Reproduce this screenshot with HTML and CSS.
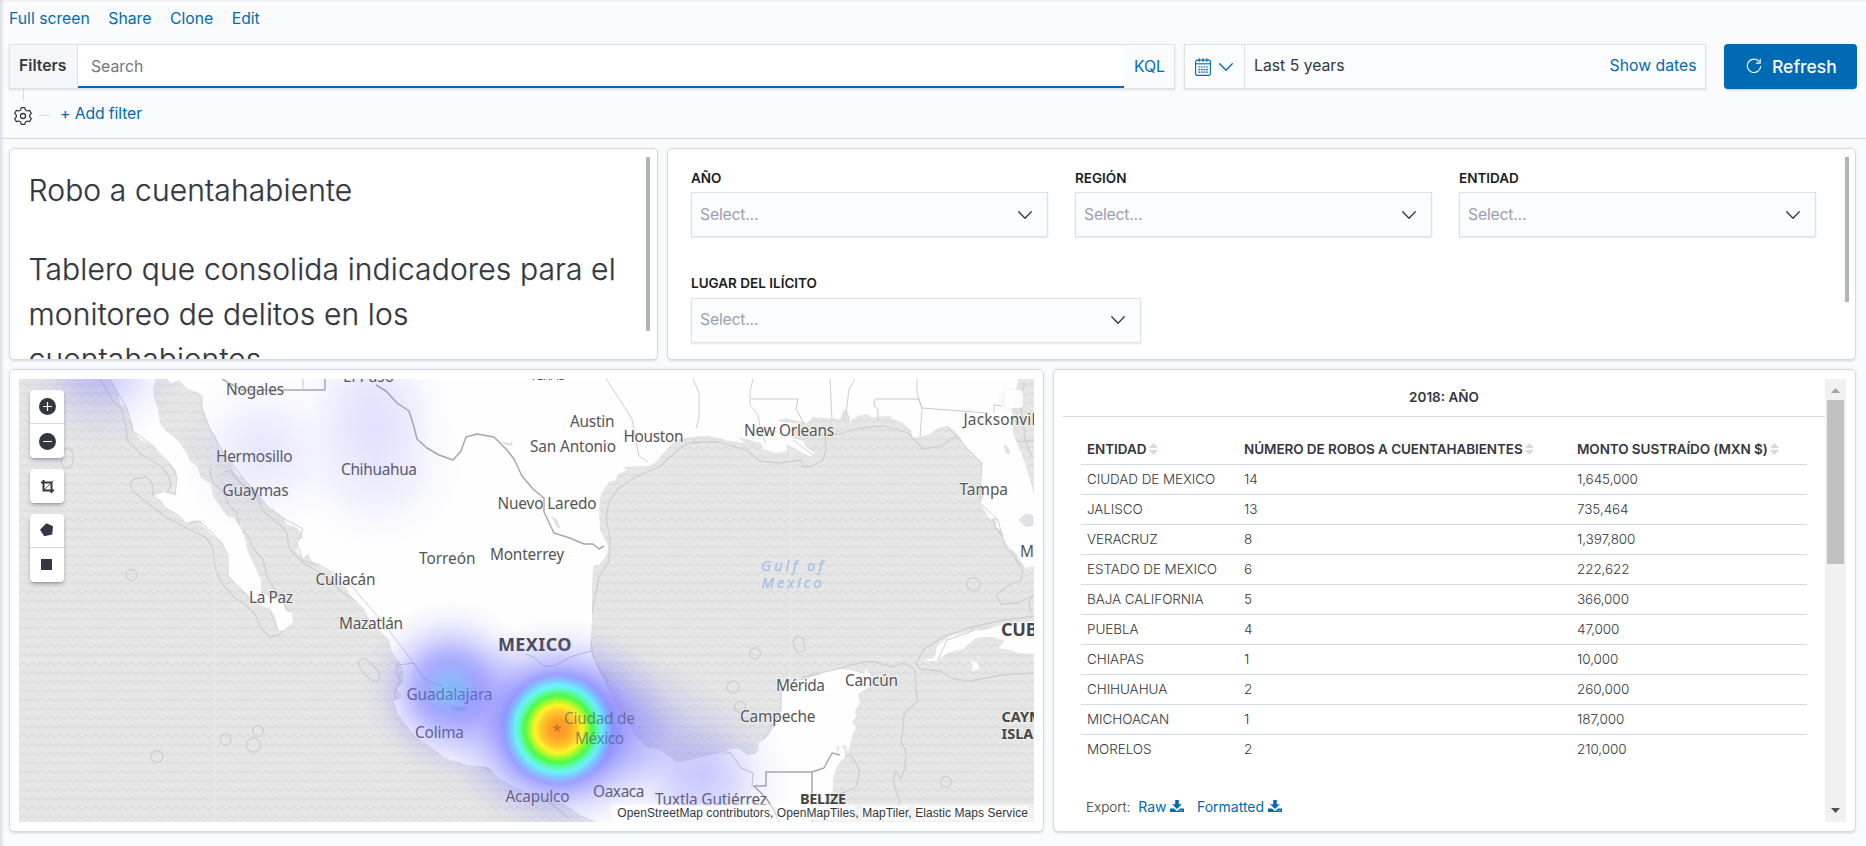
FILE: index.html
```html
<!DOCTYPE html>
<html lang="es">
<head>
<meta charset="utf-8">
<title>Robo a cuentahabiente</title>
<link rel="stylesheet" href="styles.css">
</head>
<body>
<svg class="defs" aria-hidden="true">
  <symbol id="chevron" viewBox="0 0 16 16"><path d="M1.7 4.8 8 11.2l6.3-6.4" fill="none" stroke="currentColor" stroke-width="1.3" stroke-linecap="round" stroke-linejoin="round"/></symbol>
  <symbol id="sort" viewBox="0 0 9 12"><path d="M0 5 4.5 0 9 5zM0 7h9l-4.5 5z" fill="currentColor"/></symbol>
  <symbol id="download" viewBox="0 0 14 13"><path d="M5.2 0h3.6v4.3h3L7 9 2.2 4.3h3zM0 8.6h4l3 2.6 3-2.6h4V12H0z" fill="currentColor"/><path d="M9.5 10.7h1M11.5 10.7h1" stroke="#fff" stroke-width=".8"/></symbol>
</svg>
<div class="app">
  <nav class="menu"><a>Full screen</a><a>Share</a><a>Clone</a><a>Edit</a></nav>

  <div class="query-bar">
    <div class="search-group">
      <div class="filters-label">Filters</div>
      <div class="search-input">Search</div>
      <div class="kql">KQL</div>
    </div>
    <div class="date-group">
      <div class="date-quick">
        <svg class="calendar" viewBox="0 0 16 18"><g fill="none" stroke="currentColor"><rect x=".6" y="2.1" width="14.8" height="15.3" rx="1.6" stroke-width="1.1"/><path d="M.6 5.8h14.8" stroke-width="1.1"/><path d="M4.2 0v4M8 0v4M11.8 0v4" stroke-width="1"/><path d="M3.3 9h9.6M3.3 11.6h9.6M3.3 14.2h9.6" stroke-width="1.2" stroke-dasharray="1.8 .8"/></g></svg>
        <svg class="chevron"><use href="#chevron"/></svg>
      </div>
      <div class="date-range"><span>Last 5 years</span><a>Show dates</a></div>
    </div>
    <button class="refresh">
      <svg viewBox="0 0 16 16"><path d="M13.3 3.7A6.7 6.7 0 1 0 14.7 8M14.2.7v4.4H9.9" fill="none" stroke="currentColor" stroke-width="1.1"/></svg>
      <span>Refresh</span>
    </button>
  </div>

  <div class="filter-row">
    <div class="branch"></div>
    <svg class="gear" viewBox="-9 -9 18 18"><path d="M-1.7-8.3h3.4l.7 2.2 1.9 1.1 2.3-.6 1.7 2.9-1.6 1.7v2l1.6 1.7-1.7 2.9-2.3-.6-1.9 1.1-.7 2.2h-3.4l-.7-2.2L-4.300 5l-2.300.6-1.700-2.900L-6.700 1v-2l-1.600-1.700 1.700-2.900 2.300.6 1.900-1.100z" fill="none" stroke="currentColor" stroke-width="1.200" stroke-linejoin="round"/><circle r="2.500" fill="none" stroke="currentColor" stroke-width="1.300"/></svg>
    <span class="dash"></span>
    <a>+ Add filter</a>
  </div>

  <main class="grid">
    <div class="grid-row top">
      <section class="panel intro">
        <div class="intro-text"><h1>Robo a cuentahabiente</h1><h1>Tablero que consolida indicadores para el monitoreo de delitos en los cuentahabientes</h1></div>
        <div class="thin-scroll"></div>
      </section>
      <section class="panel controls">
        <div class="fields">
          <div class="field"><label>AÑO</label><div class="select"><span>Select...</span><svg class="chevron"><use href="#chevron"/></svg></div></div>
          <div class="field"><label>REGIÓN</label><div class="select"><span>Select...</span><svg class="chevron"><use href="#chevron"/></svg></div></div>
          <div class="field"><label>ENTIDAD</label><div class="select"><span>Select...</span><svg class="chevron"><use href="#chevron"/></svg></div></div>
          <div class="field wide"><label>LUGAR DEL ILÍCITO</label><div class="select"><span>Select...</span><svg class="chevron"><use href="#chevron"/></svg></div></div>
        </div>
        <div class="thin-scroll short"></div>
      </section>
    </div>

    <div class="grid-row bottom">
      <section class="panel map-panel">
        <div class="map">
          <svg class="map-canvas" viewBox="19 379 1015 443">
            <defs>
              <pattern id="waves" width="9" height="9" patternUnits="userSpaceOnUse" x="19" y="379"><path d="M0 7q1.500 0 2.500-1.200T4.500 4.800 6.500 5.800 9 7" fill="none" stroke="#dbdbdb" stroke-width="1.300"/></pattern>
              <radialGradient id="hot"><stop offset="0" stop-color="#ff9420" stop-opacity=".95"/><stop offset=".08" stop-color="#ff9d1c" stop-opacity=".95"/><stop offset=".16" stop-color="#ffc820" stop-opacity=".95"/><stop offset=".21" stop-color="#fff51e" stop-opacity=".95"/><stop offset=".25" stop-color="#b0f820" stop-opacity=".95"/><stop offset=".3" stop-color="#3ffb38" stop-opacity=".92"/><stop offset=".35" stop-color="#4cfcb0" stop-opacity=".88"/><stop offset=".39" stop-color="#50f0ff" stop-opacity=".82"/><stop offset=".44" stop-color="#5cb0ff" stop-opacity=".74"/><stop offset=".49" stop-color="#6b70ff" stop-opacity=".64"/><stop offset=".56" stop-color="#6c6cff" stop-opacity=".46"/><stop offset=".7" stop-color="#7878ff" stop-opacity=".24"/><stop offset=".85" stop-color="#8080ff" stop-opacity=".09"/><stop offset="1" stop-color="#8080ff" stop-opacity="0"/></radialGradient>
              <radialGradient id="warm"><stop offset="0" stop-color="#4c9cf0" stop-opacity=".68"/><stop offset=".14" stop-color="#5494f6" stop-opacity=".64"/><stop offset=".28" stop-color="#6470ff" stop-opacity=".58"/><stop offset=".4" stop-color="#6868ff" stop-opacity=".48"/><stop offset=".6" stop-color="#7070ff" stop-opacity=".25"/><stop offset=".8" stop-color="#7c7cff" stop-opacity=".08"/><stop offset="1" stop-color="#8080ff" stop-opacity="0"/></radialGradient>
              <radialGradient id="mild"><stop offset="0" stop-color="#7070ff" stop-opacity=".36"/><stop offset=".3" stop-color="#7474ff" stop-opacity=".28"/><stop offset=".65" stop-color="#7c7cff" stop-opacity=".09"/><stop offset="1" stop-color="#8080ff" stop-opacity="0"/></radialGradient>
              <radialGradient id="faint"><stop offset="0" stop-color="#7474ff" stop-opacity=".17"/><stop offset=".4" stop-color="#7878ff" stop-opacity=".11"/><stop offset=".75" stop-color="#8080ff" stop-opacity=".03"/><stop offset="1" stop-color="#8080ff" stop-opacity="0"/></radialGradient>
            </defs>
            <rect x="19" y="379" width="1015" height="443" fill="#e6e6e6"/>
            <rect x="19" y="379" width="1015" height="443" fill="url(#waves)"/>
            <path class="seam" d="M214.500 379v443M502.500 379v443M790.500 379v443M19 659.500h1015"/>

            <!-- continental shelf contours -->
            <g class="shelf">
              <path d="M100 379l13 22 8 7 5 18 1 14 14 14 20 12 7 9 3 10-4 8-14 2-1-12-6-6-12 2-4 5 3 7 12 10 18 14 18 10 24 12 8 10 2 21 8 17 12 13 11 7 9 9 6 14 9 9 9-2 9-9 2-13-8-12-10-16-5-9-4-16-10-12-5-13-8-5-3-17-8-8-6-14-8-6-5-10 0-8"/>
              <path d="M224 472l6-2 7 9 8 9 12 8 6 15 18 15 6 7 2 15 13 14 20 12 20 18 17 11 17 18 15 17 2 14 6 8-3 10 4 11-6 12 5 16 9 13 18 13 20 16 17 11 18 4 16 8 24 13 24 12 24 19"/>
              <path d="M1034 441l-34 1M700 443h-12l-10 7-19 17-24 10-17 12-9 13-3 15 4 22-1 22-10 16-4 20-3 15-2 25 4 24 13 18 1 12-1 13 9 18 14 15 13 19 22 7 17 10 20-1 23-4 30-8 18-1 15-15 7-14-1-20 1-22 9-11 23-5 35-10 13 0 18 5 10-4 12 6 1 22 2 10-9 8-5 5-1 15-2 12 5 11-1 16-4 11-5-8-3 9 3 10 4 13-9 10-10 3"/>
              <path d="M692 442l27 0 27 8 14 11 19 2 22-3 2 7 9-1 11-6 3-10-1-16h15l20-6 24-2 24 7 15 16 18-3 15-10 12 7 13 17 2 12-3 27 9 12 7 17 12 16 9 18 6 9-2 9-15 7-10 8 5 9 17-1 14-7 8-5M1025 383l-6 18 4 18 2 21 7 17"/>
              <path d="M1034 616l-36 5-29 7-24 8-21 13-8 15 4 5 20 2 14 8 16 2 31-6 33-2"/>
              <path d="M64 449l5-1 4 5 0 10-3 5-6 0-3-6zM359 661l5-3 8 6 8 9-1 7-5 2-10-8-5-8zM793 641l5-5 6 3 0 5 1 6-6 3-4-4z"/>
              <circle cx="131.500" cy="575" r="5.500"/><circle cx="157" cy="756.500" r="6"/><circle cx="225.500" cy="739.500" r="5.500"/><circle cx="258" cy="731" r="5.500"/><circle cx="253.500" cy="745" r="7"/>
              <circle cx="755" cy="653.500" r="5.500"/><circle cx="733" cy="687" r="6"/><circle cx="740" cy="707" r="5.500"/><circle cx="946" cy="782" r="5.500"/><circle cx="973.500" cy="584" r="6.500"/>
              <path d="M842 758l8-3 5 6 5 10-4 16-10 5-8 2M1034 594l-5 7 2 12"/>
            </g>

            <!-- land -->
            <g class="land">
              <path d="M110 379L118 393 120 403 127 408 128 418 133 424 133 431 140 439 153 446 160 455 170 464 176 470 177 477 174 489 176 496 165 492 154 495 160 500 167 508 178 514 187 523 194 520 200 521 203 526 210 533 222 543 227 556 228 576 240 589 253 599 262 606 270 609 275 616 278 630 283 631 293 622 292 613 285 610 283 601 270 598 261 593 261 580 253 563 248 552 245 539 241 528 234 518 227 516 219 505 213 496 211 484 201 478 197 466 190 461 187 454 180 443 173 436 166 431 160 424 158 409 154 398 153 388 156 379Z"/>
              <path d="M167 379L171 383 180 380 187 389 198 392 202 396 202 408 206 419 210 429 216 436 220 449 230 461 236 474 243 478 248 486 257 489 262 498 267 506 275 511 284 518 286 524 294 526 301 532 303 538 297 540 297 552 303 558 308 554 311 560 320 566 331 573 345 587 352 597 364 609 371 622 382 633 389 640 392 652 403 668 403 683 397 688 402 697 394 701 398 714 406 725 416 737 430 746 445 758 467 765 488 767 500 779 527 793 563 803 580 815 597 822H813L812 810 826 800 833 790 833 779 837 766 845 757 845 750 840 745 838 754 836 747 845 745 848 752 853 733 856 728 852 722 856 717 855 710 860 703 858 694 866 689 872 683 871 676 866 669 864 674 850 670 840 669 823 673 807 679 782 683 781 710 776 725 768 736 759 743 758 752 746 754 742 749 730 749 723 753 710 755 690 760 677 762 660 750 648 748 637 737 620 713 611 695 597 667 590 650 592 622 592 589 593 566 600 564 607 554 608 546 600 530 599 509 601 494 609 482 616 480 617 475 627 470 623 467 650 466 656 462 667 449 675 440 700 436 710 436 730 441 745 443 738 437 750 440 761 443 763 449 777 453 787 451 787 444 803 453 811 457 815 453 805 446 803 441 793 438 790 430 800 424 777 421 785 418 807 423 813 417 840 419 844 410 850 421 858 416 867 414 872 417 890 416 893 419 903 423 911 430 913 438 918 437 930 434 938 428 947 426 957 433 967 448 982 463 980 483 985 494 980 503 990 519 997 518 996 527 1002 531 1003 539 1010 549 1016 553 1025 568 1034 566V494L1025 463 1013 433 1012 409 1015 396 1018 379Z"/>
              <path d="M923 661L935 657 937 646 950 636 973 631 985 630 1000 625 1034 621V654L1018 653 1010 650 998 648 1005 641 995 638 1005 638 985 637 976 638 963 649 947 653 937 661Z"/>
              <path d="M971 661L977 662 980 669 971 671 973 667Z"/>
            </g>
            <g class="lake">
              <path d="M1019 520l7-6 7 2v9l-7 2zM1004 445l4 3 2 5-4 0zM189 444l4 4 4 6-4-3zM552 517l5 3 3 8-3-1zM502 442l9 2 1-3 0 4-6 0zM450 706l17 2-4 3-10-1z"/>
              <path d="M740 749l8 6 8-2-3-7-8-3zM843 412l3-2 4 9-6 1z"/>
            </g>
            <g class="coast">
              <path d="M110 379l8 14 9 15 6 23 20 15 17 18 7 13-2 18M187 524l13-3 22 22 6 13v20l22 22M202 396v12l8 21 13 23 20 26 24 28 16 12 20 11-6 15 6 17 17 4 29 18 36 42 30 40"/>
              <path d="M753 379l-3 13v13l8 10 3 17 5 12M855 379l-6 10-3 25M917 379v14l5 16-2 28M606 379l12 18 14 22 3 17 4 20 9 6M947 426l20 22 15 15-2 35M980 503l18 17 8 29 18 18M781 688v22l-18 30M938 660l9-20 26-9M270 611l8 20M693 379l6 14 0 25-3 10M793 440l20 15"/>
            </g>

            <!-- national borders -->
            <g class="border">
              <path d="M222 379l20 11h83v-11M376 385l10 6 11 12 12 8 5 16 3 12 10 9 12 7 14 5 8-9 5-14 11-3 17 3 12 12 8 10 8 17 11 13 11 9v14l10 21 16 5 14 6 9 0 6 5 5-3"/>
              <path d="M812 822v-50h-46v14h-12l12 12 8 12 5 12M812 772l12-4 8-15 8 2"/>
            </g>
            <g class="minor">
              <path d="M303 379v10M751 399h47l-2 10 8 15M830 379l2 40M875 399h44l3 9 66 5M875 399l-1 7 4 3 0 12M994 413v-8l8 1"/>
              <path d="M398 665l16-2 9 15 12 6 8 2M525 654l9 3 9 9 12 0 15-9 21-6M724 754l6-2 11 16 12 5-1 15M520 742"/>
            </g>

            <g class="city" transform="translate(0 -.3)">
              <text x="226" y="395.500" textLength="58">Nogales</text>
              <text x="216" y="462.500" textLength="76.500">Hermosillo</text>
              <text x="222.500" y="496.500" textLength="66">Guaymas</text>
              <text x="249" y="603.500" textLength="44">La Paz</text>
              <text x="343" y="382" textLength="51">El Paso</text>
              <text x="341" y="475" textLength="76">Chihuahua</text>
              <text x="315.500" y="585" textLength="60">Culiacán</text>
              <text x="339" y="629.500" textLength="64">Mazatlán</text>
              <text x="530" y="380" textLength="35" font-size="12">TEXAS</text>
              <text x="570" y="427.500" textLength="44.500">Austin</text>
              <text x="530" y="452.500" textLength="86">San Antonio</text>
              <text x="623.500" y="442.500" textLength="60">Houston</text>
              <text x="497.500" y="509" textLength="99">Nuevo Laredo</text>
              <text x="419" y="564.500" textLength="56.500">Torreón</text>
              <text x="490" y="560.500" textLength="74">Monterrey</text>
              <text x="744" y="436.500" textLength="90">New Orleans</text>
              <text x="963.500" y="425.500" textLength="85">Jacksonville</text>
              <text x="959.500" y="495.500" textLength="48.500">Tampa</text>
              <text x="1020" y="557.500">Miami</text>
              <text x="406.500" y="700" textLength="86">Guadalajara</text>
              <text x="415" y="738.500" textLength="49">Colima</text>
              <text x="505.500" y="802.500" textLength="64">Acapulco</text>
              <text x="593" y="797.500" textLength="51.500">Oaxaca</text>
              <text x="655" y="805.500" textLength="112">Tuxtla Gutiérrez</text>
              <text x="776" y="691.500" textLength="49">Mérida</text>
              <text x="845" y="686.500" textLength="53">Cancún</text>
              <text x="740" y="722.500" textLength="75.500">Campeche</text>
            </g>
            <g class="sea"><text x="761" y="570.500" textLength="62">Gulf of</text><text x="761.500" y="588" textLength="60">Mexico</text></g>
            <g class="country">
              <text x="498" y="650.500" font-size="18" textLength="73.500">MEXICO</text>
              <text x="1001" y="636" font-size="18" textLength="49">CUBA</text>
              <text x="1001.500" y="721.500" font-size="14.500">CAYMAN</text>
              <text x="1001.500" y="738.500" font-size="14.500">ISLANDS</text>
              <text x="800" y="803.500" font-size="14.500" textLength="46">BELIZE</text>
            </g>

            <!-- heat layer -->
            <circle cx="100" cy="368" r="82" fill="url(#mild)"/>
            <circle cx="262" cy="452" r="84" fill="url(#faint)"/>
            <circle cx="376" cy="462" r="88" fill="url(#faint)"/>
            <circle cx="372" cy="398" r="80" fill="url(#faint)"/>
            <circle cx="703" cy="777" r="88" fill="url(#mild)"/>
            <ellipse cx="630" cy="735" rx="105" ry="80" fill="url(#mild)"/>
            <ellipse cx="615" cy="705" rx="85" ry="75" fill="url(#faint)"/>
            <ellipse cx="500" cy="725" rx="115" ry="90" fill="url(#faint)"/>
            <circle cx="450" cy="688" r="88" fill="url(#warm)"/>
            <circle cx="558.500" cy="729" r="112" fill="url(#hot)"/>
            <path d="M557 723l1.200 3.400 3.600.1-2.900 2.200 1.100 3.500-3-2.100-3 2.100 1.100-3.500-2.900-2.200 3.600-.1z" fill="#c47a2a"/>
            <g class="city capital">
              <text x="564" y="724" textLength="71">Ciudad de</text>
              <text x="575" y="743.500" textLength="49">México</text>
            </g>
          </svg>
          <div class="tools">
            <div class="tool-group">
              <div class="tool"><svg viewBox="0 0 17 17"><circle cx="8.500" cy="8.500" r="8.500" fill="#343741"/><path d="M8.500 4v9M4 8.500h9" stroke="#fff" stroke-width="1.200"/></svg></div>
              <div class="tool"><svg viewBox="0 0 17 17"><circle cx="8.500" cy="8.500" r="8.500" fill="#343741"/><path d="M4 8.500h9" stroke="#fff" stroke-width="1.200"/></svg></div>
            </div>
            <div class="tool-group">
              <div class="tool single"><svg viewBox="0 0 17 17"><path d="M4.500 2v10.500H15M2 4.500h10.500V15" fill="none" stroke="#343741" stroke-width="2"/><path d="M5 12l9.500-9.500" stroke="#343741" stroke-width=".8"/></svg></div>
            </div>
            <div class="tool-group">
              <div class="tool"><svg viewBox="0 0 17 17"><path d="M7.300 1.200L14 4.300l-.8 8.200-8 1.800L1 7.800z" fill="#343741"/></svg></div>
              <div class="tool"><svg viewBox="0 0 17 17"><path d="M2 2h11v11H2z" fill="#343741"/></svg></div>
            </div>
          </div>
          <div class="layer-toggle"></div>
          <div class="attribution"><span>OpenStreetMap contributors</span>, <span>OpenMapTiles</span>, <span>MapTiler</span>, <span>Elastic Maps Service</span></div>
        </div>
      </section>

      <section class="panel table-panel">
        <div class="table-content">
          <h2>2018: AÑO</h2>
          <table>
            <thead><tr><th class="c1">ENTIDAD<svg class="sort"><use href="#sort"/></svg></th><th class="c2">NÚMERO DE ROBOS A CUENTAHABIENTES<svg class="sort"><use href="#sort"/></svg></th><th>MONTO SUSTRAÍDO (MXN $)<svg class="sort"><use href="#sort"/></svg></th></tr></thead>
            <tbody>
              <tr><td>CIUDAD DE MEXICO</td><td>14</td><td>1,645,000</td></tr>
              <tr><td>JALISCO</td><td>13</td><td>735,464</td></tr>
              <tr><td>VERACRUZ</td><td>8</td><td>1,397,800</td></tr>
              <tr><td>ESTADO DE MEXICO</td><td>6</td><td>222,622</td></tr>
              <tr><td>BAJA CALIFORNIA</td><td>5</td><td>366,000</td></tr>
              <tr><td>PUEBLA</td><td>4</td><td>47,000</td></tr>
              <tr><td>CHIAPAS</td><td>1</td><td>10,000</td></tr>
              <tr><td>CHIHUAHUA</td><td>2</td><td>260,000</td></tr>
              <tr><td>MICHOACAN</td><td>1</td><td>187,000</td></tr>
              <tr><td>MORELOS</td><td>2</td><td>210,000</td></tr>
            </tbody>
          </table>
          <div class="export"><span>Export:</span><a class="raw">Raw <svg><use href="#download"/></svg></a><a>Formatted <svg><use href="#download"/></svg></a></div>
        </div>
        <div class="scrollbar">
          <svg viewBox="0 0 9 5"><path d="M0 5 4.500 0 9 5z" fill="#a3a3a3"/></svg>
          <div class="thumb"></div>
          <svg class="down" viewBox="0 0 9 5"><path d="M0 0h9L4.500 5z" fill="#505050"/></svg>
        </div>
      </section>
    </div>
  </main>
</div>
</body>
</html>
```

FILE: styles.css
```css
* { box-sizing: border-box; }
body {
  margin: 0;
  width: 1866px;
  height: 846px;
  overflow: hidden;
  background: #fafbfd;
  color: #343741;
  font: 400 15.75px/24px Inter, "Liberation Sans", sans-serif;
}
.defs { display: block; width: 0; height: 0; }
.app { height: 846px; box-shadow: inset 4px 0 4px -3px rgba(110, 120, 150, .35), inset 0 3px 3px -3px rgba(110, 120, 150, .15); }
a { color: #006bb4; }
.chevron { width: 16px; height: 16px; flex: none; }

.menu { display: flex; gap: 18.500px; padding: 7px 9px 0; height: 44px; }

.query-bar { display: flex; height: 45px; padding: 0 9px; }
.search-group, .date-group {
  display: flex;
  height: 45px;
  border: 1px solid #dfe1e5;
  box-shadow: 0 1px 2px rgba(152, 162, 179, .3);
}
.search-group { width: 1166px; }
.filters-label { width: 68px; padding: 9px 0 0 9px; background: #f5f7fa; border-right: 1px solid #dfe1e5; font-weight: 600; }
.search-input { flex: 1; padding: 10px 0 0 13px; background: #fff; border-bottom: 2px solid #006bb4; color: #72767f; height: 43px; }
.kql { width: 50px; padding: 10px 0 0 10px; color: #006bb4; }
.date-group { width: 522px; margin-left: 9px; background: #fbfcfd; }
.date-quick { width: 60px; display: flex; align-items: center; gap: 7px; padding-left: 10px; border-right: 1px solid #dfe1e5; color: #006bb4; }
.calendar { width: 16px; height: 18px; }
.date-range { flex: 1; display: flex; justify-content: space-between; padding: 9px 8.500px 0 9px; }
.refresh {
  display: flex;
  align-items: center;
  gap: 10px;
  width: 133px;
  margin-left: 18px;
  padding: 0 0 0 22px;
  border: 0;
  border-radius: 4px;
  background: #006bb4;
  box-shadow: 0 2px 2px -1px rgba(54, 97, 126, .3);
  color: #fff;
  font: 500 17.5px Inter, "Liberation Sans", sans-serif;
}
.refresh svg { width: 16px; height: 16px; margin-top: -2px; }

.filter-row { display: grid; grid-template-columns: 18px 11px 1fr; column-gap: 7px; row-gap: 6px; height: 50px; padding-left: 14px; grid-template-rows: 11px 22px; border-bottom: 1px solid #d3dae6; }
.branch { grid-column: 1 / -1; width: 1px; margin-left: 9px; background: #d3dae6; }
.gear { width: 18px; height: 18px; margin-top: 1px; color: #343741; }
.dash { width: 11px; height: 1px; margin-top: 9px; background: #d3dae6; }
.filter-row a { padding-left: 3px; margin-top: -4px; letter-spacing: -.1px; }

.grid { display: flex; flex-direction: column; gap: 9px; padding: 9px 10px 0 9px; }
.grid-row { display: flex; gap: 9px; }
.top { height: 212px; }
.bottom { height: 463px; }
.panel {
  position: relative;
  display: flex;
  overflow: hidden;
  background: #fff;
  border: 1px solid #d3dae6;
  border-radius: 5px;
}
.grid-row > .panel { box-shadow: 0 2px 2px -1px rgba(152, 162, 179, .35), 0 0 4px rgba(152, 162, 179, .15); }
.intro { width: 649px; justify-content: space-between; padding: 8px 7px 0 18.500px; }
.intro-text { width: 600px; padding-top: 11px; }
.intro h1 { margin: 0 0 34px; font: 300 30px/45px Inter, "Liberation Sans", sans-serif; letter-spacing: .13px; -webkit-text-stroke: .25px #343741; }
.thin-scroll { width: 4px; height: 174px; background: #b1b3bd; }
.thin-scroll.short { height: 145px; }
.controls { flex: 1; justify-content: space-between; padding: 8px 6px 0 23px; }
.fields { display: flex; flex-wrap: wrap; align-content: flex-start; column-gap: 27.500px; width: 1130px; }
.field { width: 356.500px; height: 106px; padding-top: 11px; }
.field.wide { width: 450px; padding-top: 10px; }
.field label { display: block; height: 24px; color: #1a1c21; font: 600 13.500px/20px Inter, "Liberation Sans", sans-serif; }
.field.wide label { height: 25px; }
.select { display: flex; align-items: center; justify-content: space-between; height: 45px; padding: 1px 14px 0 8px; border: 1px solid #dfe1e5; background: #fbfcfd; box-shadow: 0 1px 2px rgba(152, 162, 179, .25); color: #98a2b3; letter-spacing: -.2px; }
.field.wide .select { padding-top: 0; padding-bottom: 1px; }
.select .chevron { color: #343741; }

.map-panel { width: 1035px; padding: 9px; }
.map { position: relative; width: 1015px; height: 443px; overflow: hidden; }
.map-canvas { display: block; width: 1015px; height: 443px; font-family: "Noto Sans", "Open Sans", sans-serif; }
.seam { fill: none; stroke: #ebebeb; stroke-width: 1; }
.shelf { fill: none; stroke: #cfcfcf; stroke-width: 1.300; stroke-linejoin: round; }
.land { fill: #fefefe; }
.lake { fill: #dfe2e6; stroke: #ccd4de; stroke-width: .5; }
.coast { fill: none; stroke: #c9d1de; stroke-width: 1; stroke-linejoin: round; }
.border { fill: none; stroke: #a8a8a8; stroke-width: 1.500; stroke-linejoin: round; }
.minor { fill: none; stroke: #cacaca; stroke-width: 1; }
.city, .country { paint-order: stroke; stroke: rgba(255, 255, 255, .6); stroke-width: 1.500px; }
.city { fill: #555; font-size: 15.400px; }
.capital { fill: #46506e; fill-opacity: .62; stroke: none; }
.country { fill: #444; font-weight: 700; }
.sea { fill: #a9c2e4; stroke: #a9c2e4; stroke-width: .3px; font-size: 14.800px; font-style: italic; }

.tools { position: absolute; left: 11px; top: 11px; display: flex; flex-direction: column; gap: 11px; }
.tool-group { width: 34px; background: #fff; border-radius: 4px; box-shadow: 0 3px 5px -1px rgba(65, 78, 101, .4), 0 1px 2px rgba(65, 78, 101, .2); }
.tool { display: flex; align-items: center; justify-content: center; height: 33px; }
.tool.single { height: 34px; }
.tool + .tool { height: 35px; border-top: 1px solid #d3dae6; }
.tool svg { width: 17px; height: 17px; }
.layer-toggle { position: absolute; top: 11px; right: 11px; width: 18px; height: 18px; border-radius: 4px; background: #fff; box-shadow: -2px 1px 6px rgba(152, 162, 179, .18); opacity: .9; }
.attribution { position: absolute; right: 0; bottom: 0; height: 18px; padding: 0 6px; background: rgba(255, 255, 255, .5); color: #343741; font: 12px/18px "Liberation Sans", sans-serif; letter-spacing: .075px; white-space: nowrap; }
.attribution span { background: rgba(255, 255, 255, .7); }

.table-panel { flex: 1; padding: 9px; }
.table-content { flex: 1; }
.table-content h2 { margin: 0; height: 38px; padding-top: 8px; border-bottom: 1px solid #d3dae6; text-align: center; font: 600 13.500px/20px Inter, "Liberation Sans", sans-serif; }
table { width: 726px; margin: 17px 0 0 18px; border-collapse: collapse; table-layout: fixed; font-size: 13.500px; line-height: 20px; }
th, td { height: 30px; padding: 0 0 0 6px; border-bottom: 1px solid #d3dae6; text-align: left; font-weight: 300; white-space: nowrap; letter-spacing: -.08px; }
th { font-weight: 600; }
.c1 { width: 157px; }
.c2 { width: 333px; }
tbody tr:last-child td { border-bottom: 0; }
.sort { width: 9px; height: 12px; margin-left: 2.500px; vertical-align: -1px; color: #d3dae6; }
.export { display: flex; padding: 33px 0 0 23px; font: 300 13.500px/20px Inter, "Liberation Sans", sans-serif; }
.export a { margin-left: 8px; font-size: 14px; font-weight: 400; }
.export .raw + a { margin-left: 12.500px; }
.export svg { width: 14px; height: 13px; vertical-align: -1px; }
.scrollbar { display: flex; flex-direction: column; align-items: center; width: 21px; padding-top: 9px; background: #f1f1f1; }
.scrollbar svg { width: 9px; height: 5px; }
.thumb { width: 17px; height: 164px; margin-top: 7px; background: #c1c1c1; }
.scrollbar .down { margin-top: auto; margin-bottom: 9px; }
```
